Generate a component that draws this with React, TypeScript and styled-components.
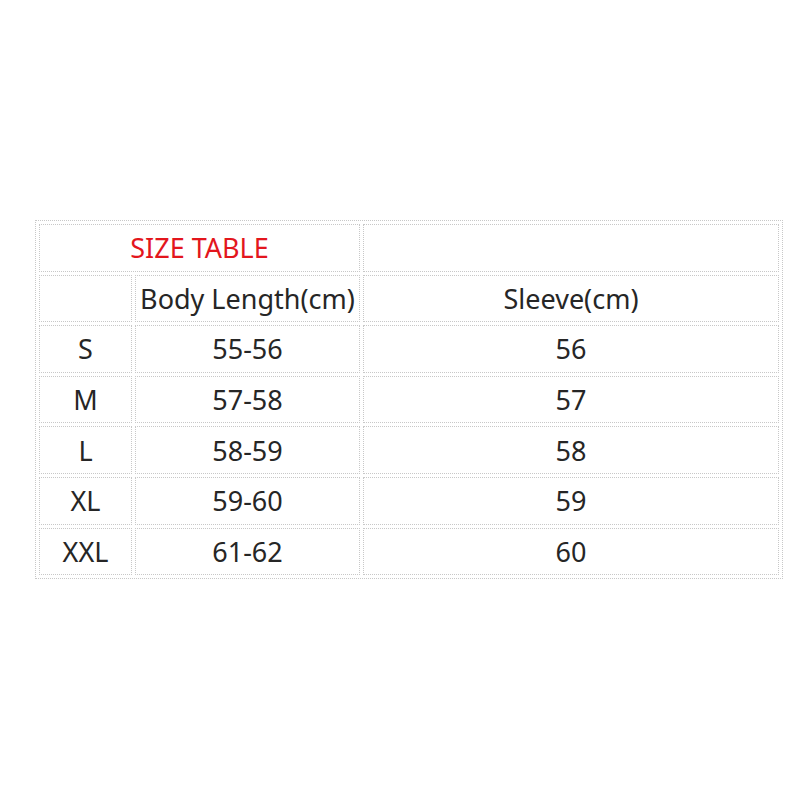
import styled, { createGlobalStyle } from "styled-components";

const GlobalStyle = createGlobalStyle`
    body {
        margin: 0;
        background: #ffffff;
        font-family: "Noto Sans", "Open Sans", sans-serif;
    }
`;

const sizes = [
    { size: "S", body: "55-56", sleeve: "56" },
    { size: "M", body: "57-58", sleeve: "57" },
    { size: "L", body: "58-59", sleeve: "58" },
    { size: "XL", body: "59-60", sleeve: "59" },
    { size: "XXL", body: "61-62", sleeve: "60" },
];

function App() {
    return (
        <Page>
            <GlobalStyle />
            <Table>
                <colgroup>
                    <col style={{ width: 93 }} />
                    <col style={{ width: 225 }} />
                    <col style={{ width: 416 }} />
                </colgroup>
                <tbody>
                    <tr>
                        <Cell colSpan={2} $title>SIZE TABLE</Cell>
                        <Cell></Cell>
                    </tr>
                    <tr>
                        <Cell></Cell>
                        <Cell>Body Length(cm)</Cell>
                        <Cell>Sleeve(cm)</Cell>
                    </tr>
                    {sizes.map((s) => (
                        <tr key={s.size}>
                            <Cell>{s.size}</Cell>
                            <Cell>{s.body}</Cell>
                            <Cell>{s.sleeve}</Cell>
                        </tr>
                    ))}
                </tbody>
            </Table>
        </Page>
    );
}

const Page = styled.div`
    width: 800px;
    height: 800px;
    padding: 220px 0 0 35px;
    box-sizing: border-box;
`;

const Table = styled.table`
    border: 1px dotted #c8c8c8;
    border-collapse: separate;
    border-spacing: 3px;
    table-layout: fixed;
`;

const Cell = styled.td<{ $title?: boolean }>`
    height: 47.6px;
    padding: 0;
    box-sizing: border-box;
    border: 1px dotted #c8c8c8;
    text-align: center;
    vertical-align: middle;
    font-size: 27px;
    line-height: 1;
    color: ${(p) => (p.$title ? "#e3161d" : "#262626")};
    white-space: nowrap;
`;

export default App;
